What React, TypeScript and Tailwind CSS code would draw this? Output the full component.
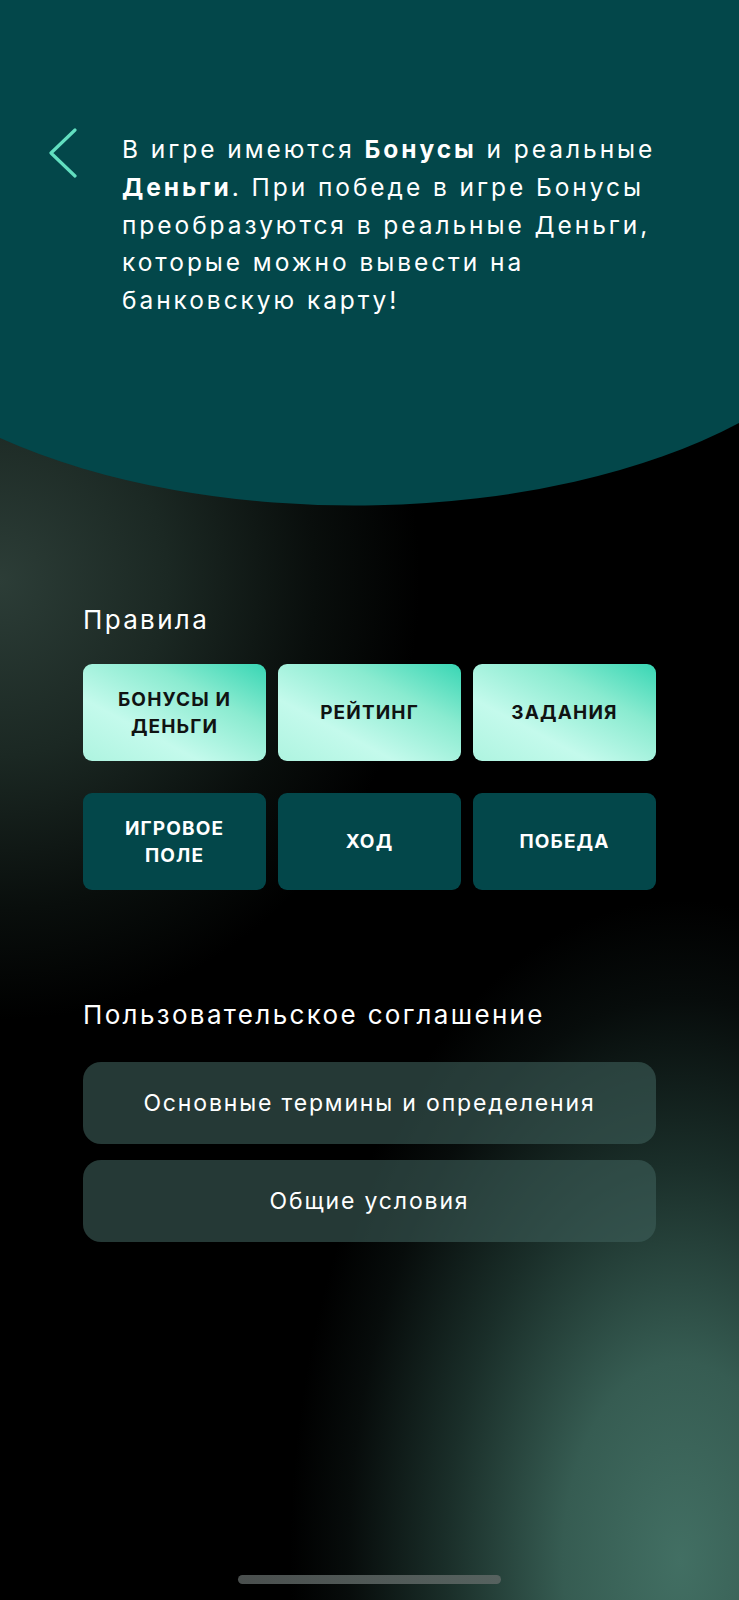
import { ReactNode } from "react";

const rules = [
    { title: ["БОНУСЫ И", "ДЕНЬГИ"], active: true },
    { title: ["РЕЙТИНГ"], active: true },
    { title: ["ЗАДАНИЯ"], active: true },
    { title: ["ИГРОВОЕ", "ПОЛЕ"], active: false },
    { title: ["ХОД"], active: false },
    { title: ["ПОБЕДА"], active: false },
];

const agreement = ["Основные термины и определения", "Общие условия"];

function BackChevron() {
    return (
        <svg width="30" height="50" viewBox="0 0 30 50" fill="none">
            <polyline
                points="27,2 3,25 27,48"
                stroke="#62dfc0"
                strokeWidth="3.2"
                strokeLinecap="round"
                strokeLinejoin="round"
            />
        </svg>
    );
}

function RuleTile({ title, active }: { title: string[]; active: boolean }) {
    return (
        <button
            className={
                active
                    ? "h-[97px] rounded-[9px] flex flex-col items-center justify-center text-[#101312] font-bold text-[19px] leading-[27px] tracking-[0.06em] bg-[linear-gradient(to_top_right,#aef4e0_0%,#c4faec_32%,#8aebd0_68%,#38d6b4_100%)]"
                    : "h-[97px] rounded-[9px] flex flex-col items-center justify-center text-white font-bold text-[19px] leading-[27px] tracking-[0.06em] bg-[#03474a]"
            }
        >
            {title.map((line) => (
                <span key={line}>{line}</span>
            ))}
        </button>
    );
}

function Section({ label, children }: { label: string; children: ReactNode }) {
    return (
        <section className="px-[83px]">
            <h2 className="text-white text-[26px] leading-[32px] font-normal tracking-[0.09em]">{label}</h2>
            {children}
        </section>
    );
}

export default function App() {
    return (
        <div
            className="min-h-[1600px] w-full flex flex-col bg-black bg-[radial-gradient(ellipse_420px_440px_at_0px_580px,#2c3d37_0%,#1b2823_40%,#090e0c_75%,transparent_100%),radial-gradient(ellipse_390px_660px_at_680px_1560px,#426f63_0%,#365c52_30%,#1a2e29_60%,#070c0b_85%,transparent_100%)] font-['Inter','Noto_Sans',sans-serif]"
        >
            {/* Teal header with curved bottom edge */}
            <header className="h-[507px] bg-[#03474a] [clip-path:path('M0_0H739V423A520_252_0_0_1_0_438Z')]">
                <div className="flex pt-[128px] pl-[48px]">
                    <BackChevron />
                    <p className="ml-[44px] text-white text-[24.5px] leading-[37.8px] tracking-[0.12em] mt-[3px]">
                        В игре имеются <b>Бонусы</b> и реальные
                        <br />
                        <b>Деньги</b>. При победе в игре Бонусы
                        <br />
                        преобразуются в реальные Деньги,
                        <br />
                        которые можно вывести на
                        <br />
                        банковскую карту!
                    </p>
                </div>
            </header>

            <div className="mt-[97px]">
                <Section label="Правила">
                    <div className="mt-[28px] grid grid-cols-3 gap-x-[12px] gap-y-[32px]">
                        {rules.map((r) => (
                            <RuleTile key={r.title.join(" ")} title={r.title} active={r.active} />
                        ))}
                    </div>
                </Section>
            </div>

            <div className="mt-[109px]">
                <Section label="Пользовательское соглашение">
                    <div className="mt-[31px] flex flex-col gap-[16px]">
                        {agreement.map((item) => (
                            <button
                                key={item}
                                className="h-[82px] rounded-[18px] bg-[#3e5f5a]/60 text-white text-[23px] tracking-[0.08em] flex items-center justify-center"
                            >
                                {item}
                            </button>
                        ))}
                    </div>
                </Section>
            </div>

            {/* Home indicator */}
            <div className="mt-auto mb-[16px] flex justify-center">
                <div className="w-[263px] h-[9px] rounded-full bg-[linear-gradient(90deg,#4a4f4e,#56625f)]" />
            </div>
        </div>
    );
}
